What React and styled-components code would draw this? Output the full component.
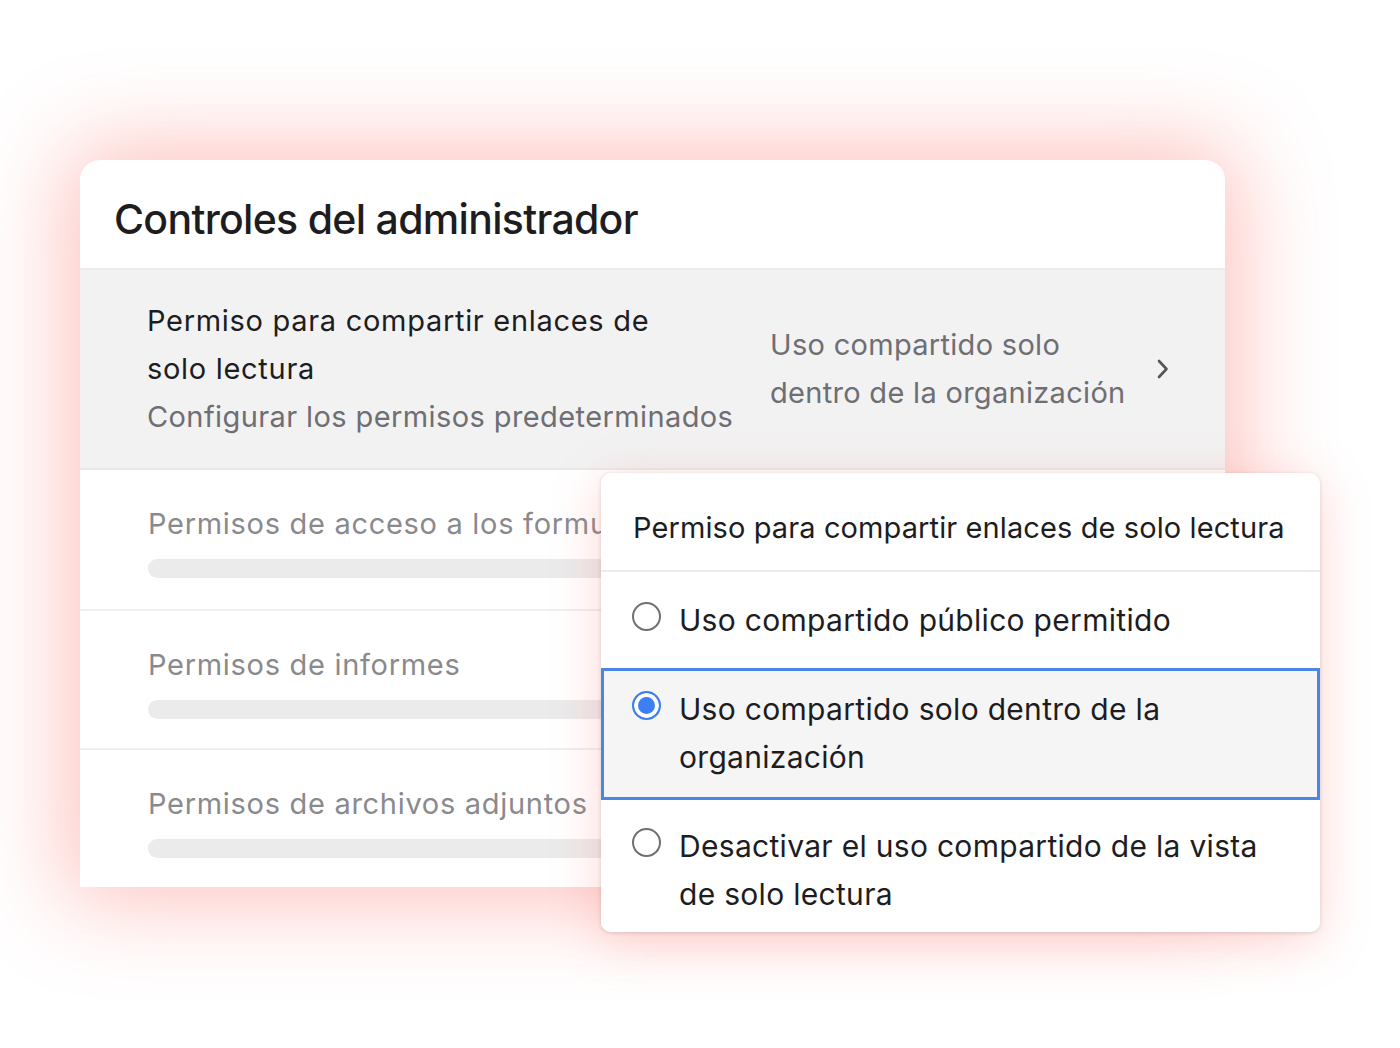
import React, { useState } from "react";
import styled, { createGlobalStyle } from "styled-components";

const GlobalStyle = createGlobalStyle`
  html, body {
    margin: 0;
    padding: 0;
    background: #ffffff;
  }
  body {
    font-family: Inter, "Liberation Sans", sans-serif;
    -webkit-font-smoothing: antialiased;
  }
`;

const options = [
  { id: "public", label: "Uso compartido público permitido" },
  { id: "org", label: "Uso compartido solo dentro de la organización" },
  { id: "off", label: "Desactivar el uso compartido de la vista de solo lectura" },
];

const placeholders = [
  "Permisos de acceso a los formularios",
  "Permisos de informes",
  "Permisos de archivos adjuntos",
];

function Chevron() {
  return (
    <svg width="14" height="22" viewBox="0 0 14 22" fill="none">
      <path d="M3 3l7.5 8L3 19" stroke="#555" strokeWidth="2.6" strokeLinecap="round" strokeLinejoin="round" />
    </svg>
  );
}

export default function App() {
  const [selected, setSelected] = useState("org");

  return (
    <Page>
      <GlobalStyle />
      <Card>
        <Header>
          <Heading>Controles del administrador</Heading>
        </Header>
        <ActiveRow>
          <RowLeft>
            <RowTitle>Permiso para compartir enlaces de solo lectura</RowTitle>
            <RowSub>Configurar los permisos predeterminados</RowSub>
          </RowLeft>
          <RowValue>Uso compartido solo dentro de la organización</RowValue>
          <ChevronBox>
            <Chevron />
          </ChevronBox>
        </ActiveRow>
        {placeholders.map((label, i) => (
          <MutedRow key={label} $first={i === 0}>
            <MutedLabel>{label}</MutedLabel>
            <Bar />
          </MutedRow>
        ))}

        <Menu>
          <MenuHeader>Permiso para compartir enlaces de solo lectura</MenuHeader>
          {options.map((o) => (
            <Option key={o.id} $active={selected === o.id} onClick={() => setSelected(o.id)}>
              <Radio $checked={selected === o.id} />
              <OptionLabel>{o.label}</OptionLabel>
            </Option>
          ))}
        </Menu>
      </Card>
    </Page>
  );
}

const Page = styled.div`
  width: 1400px;
  height: 1048px;
  box-sizing: border-box;
  padding: 160px 0 0 80px;
  overflow: hidden;
`;

const Card = styled.div`
  position: relative;
  width: 1145px;
  background: #fff;
  border-radius: 20px 20px 0 0;
  box-shadow: 0 0 90px 14px rgba(250, 120, 110, 0.45);
`;

const Header = styled.div`
  height: 98px;
  padding: 10px 0 0 34px;
  display: flex;
  align-items: center;
  border-bottom: 2px solid #ececed;
`;

const Heading = styled.h1`
  margin: 0;
  font-size: 41px;
  font-weight: 500;
  letter-spacing: -0.7px;
  color: #1d1d1f;
`;

const ActiveRow = styled.div`
  height: 198px;
  display: flex;
  align-items: center;
  padding-left: 67px;
  background: #f2f2f3;
  border-bottom: 2px solid #e9e9ea;
`;

const RowLeft = styled.div`
  flex: 0 0 623px;
  display: flex;
  flex-direction: column;
`;

const RowTitle = styled.div`
  width: 530px;
  font-size: 29px;
  line-height: 48px;
  color: #1d1d1f;
  letter-spacing: 0.7px;
`;

const RowSub = styled.div`
  font-size: 29px;
  line-height: 48px;
  color: #6e6e73;
  letter-spacing: 0.4px;
  white-space: nowrap;
`;

const RowValue = styled.div`
  width: 372px;
  font-size: 29px;
  line-height: 48px;
  color: #6e6e73;
  letter-spacing: 0.3px;
`;

const ChevronBox = styled.div`
  display: flex;
  align-items: center;
  margin-left: 14px;
`;

const MutedRow = styled.div`
  height: 139px;
  box-sizing: border-box;
  padding: 36px 0 0 68px;
  border-top: ${(p) => (p.$first ? "none" : "2px solid #efeff0")};
`;

const MutedLabel = styled.div`
  font-size: 29px;
  line-height: 36px;
  color: #8a8a8e;
  letter-spacing: 0.7px;
  white-space: nowrap;
`;

const Bar = styled.div`
  margin-top: 17px;
  width: 600px;
  height: 19px;
  border-radius: 10px;
  background: #ebebec;
`;

const Menu = styled.div`
  position: absolute;
  left: 521px;
  top: 313px;
  width: 719px;
  background: #fff;
  border-radius: 10px;
  overflow: hidden;
  box-shadow: 0 1px 4px rgba(0, 0, 0, 0.14), 0 10px 50px rgba(250, 120, 110, 0.3);
`;

const MenuHeader = styled.div`
  height: 85px;
  padding: 12px 0 0 32px;
  display: flex;
  align-items: center;
  font-size: 29px;
  color: #1d1d1f;
  letter-spacing: 0.1px;
  border-bottom: 2px solid #ececed;
`;

const Option = styled.div`
  display: flex;
  align-items: flex-start;
  gap: 18px;
  padding: ${(p) => (p.$active ? "14px 28px 16px 28px" : "24px 31px 24px 31px")};
  border: ${(p) => (p.$active ? "3px solid #4a86e8" : "none")};
  background: ${(p) => (p.$active ? "#f5f5f6" : "#fff")};
  cursor: pointer;
  &:last-child {
    padding-top: 22px;
    padding-bottom: 14px;
  }
`;

const Radio = styled.span`
  flex: 0 0 auto;
  box-sizing: border-box;
  width: 29px;
  height: 29px;
  margin-top: 6px;
  border-radius: 50%;
  border: 2px solid ${(p) => (p.$checked ? "#3d7ff2" : "#707070")};
  background: ${(p) => (p.$checked ? "#3d7ff2" : "#fff")};
  box-shadow: ${(p) => (p.$checked ? "inset 0 0 0 4px #fff" : "none")};
`;

const OptionLabel = styled.div`
  max-width: 590px;
  font-size: 30px;
  line-height: 48px;
  letter-spacing: 0.3px;
  color: #1d1d1f;
`;
